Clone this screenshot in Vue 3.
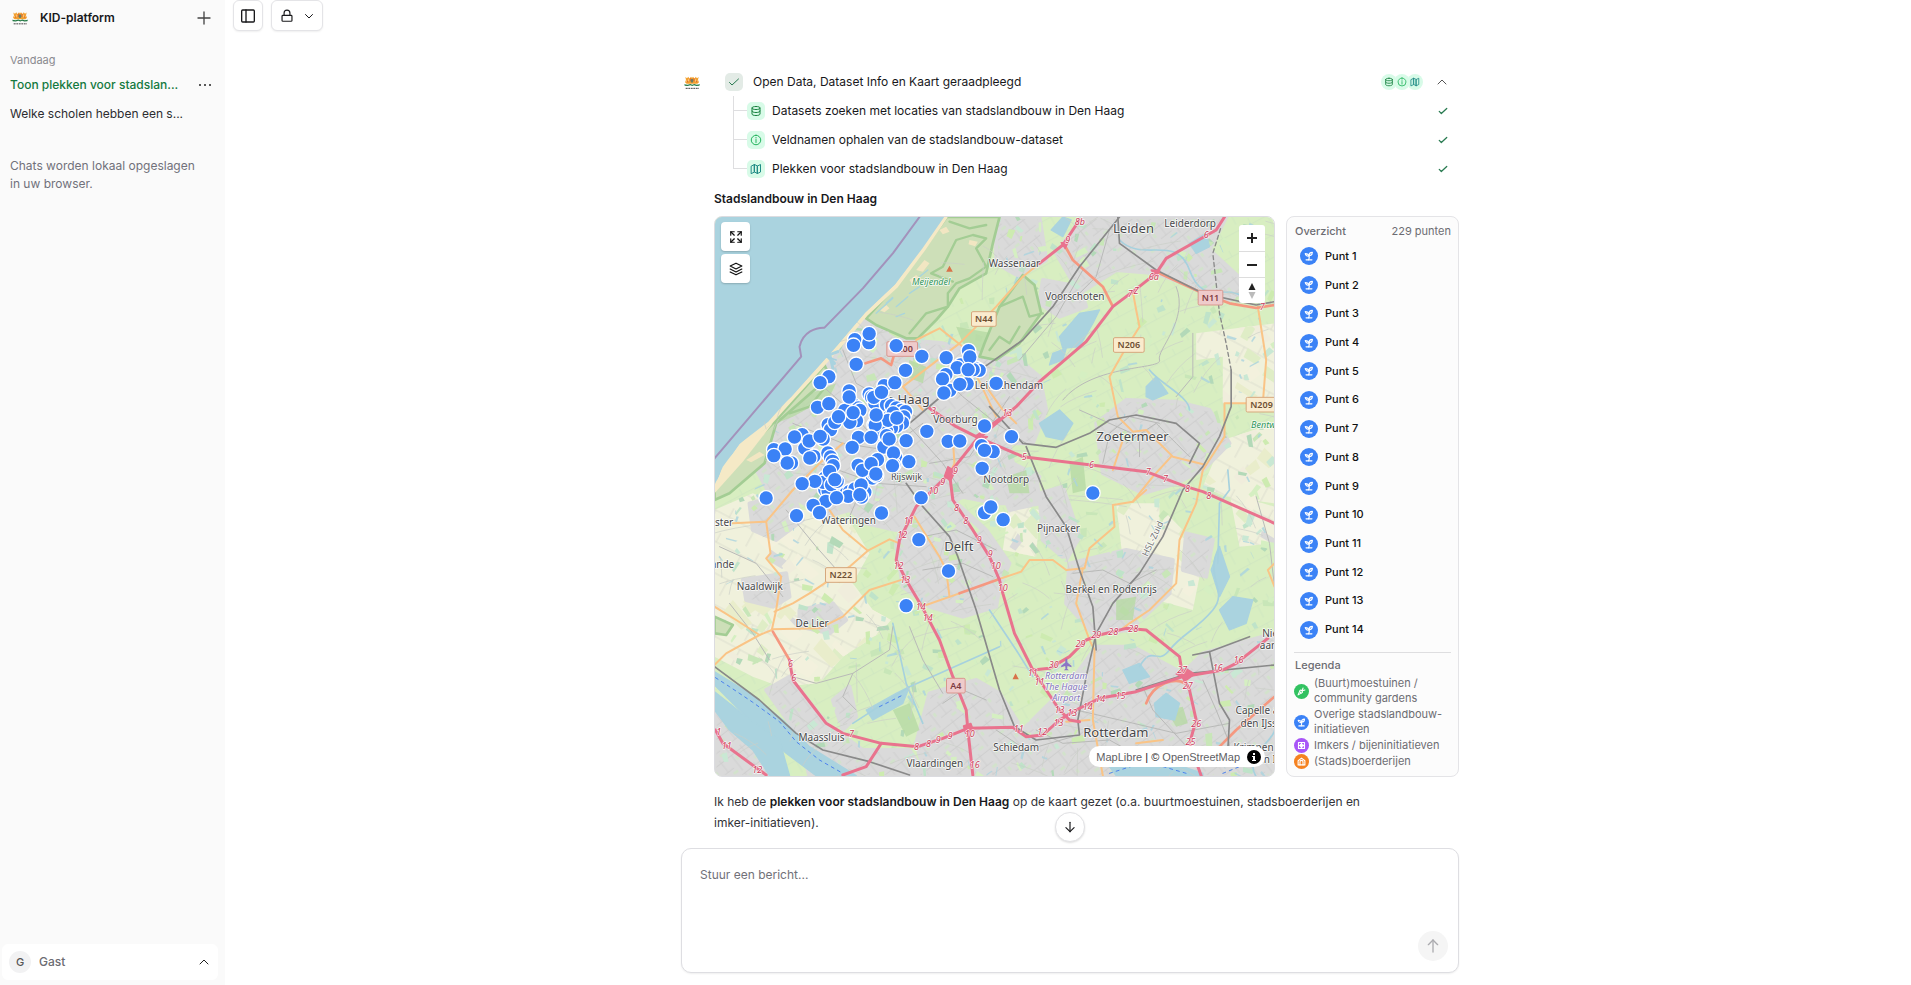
<script setup>
import { h } from 'vue'

const steps = [
  { icon: 'database', text: 'Datasets zoeken met locaties van stadslandbouw in Den Haag' },
  { icon: 'info', text: 'Veldnamen ophalen van de stadslandbouw-dataset' },
  { icon: 'map', text: 'Plekken voor stadslandbouw in Den Haag' },
]
const legend = [
  { icon: 'carrot', cls: 'green', text: '(Buurt)moestuinen / community gardens' },
  { icon: 'sprout', cls: 'blue', text: 'Overige stadslandbouw-initiatieven' },
  { icon: 'hive', cls: 'purple', text: 'Imkers / bijeninitiatieven' },
  { icon: 'barn', cls: 'orange', text: '(Stads)boerderijen' },
]

const shapes = {
  database: ['M12 3c5 0 8 1.3 8 3s-3 3-8 3-8-1.300-8-3 3-3 8-3z', 'M4 6v12c0 1.700 3 3 8 3s8-1.300 8-3V6', 'M4 12c0 1.700 3 3 8 3s8-1.300 8-3'],
  info: ['M12 2.500a9.500 9.500 0 1 0 0 19a9.500 9.500 0 1 0 0-19z', 'M12 11v6', 'M12 7v1'],
  map: ['M3 6l6-3v15l-6 3z', 'M9 3l6 3v15l-6-3z', 'M15 6l6-3v15l-6 3z'],
  check: ['M3 13l5 5L21 6'],
  up: ['M4 16l8-8 8 8'],
  down: ['M5 9l7 7 7-7'],
  plus: ['M12 3v18', 'M3 12h18'],
  panel: ['M4 3h16a1.500 1.500 0 0 1 1.500 1.500v15a1.500 1.500 0 0 1-1.500 1.500h-16a1.500 1.500 0 0 1-1.500-1.500v-15a1.500 1.500 0 0 1 1.500-1.500z', 'M9 3v18'],
  lock: ['M5 11h14a1.500 1.500 0 0 1 1.500 1.500v7a1.500 1.500 0 0 1-1.500 1.500h-14a1.500 1.500 0 0 1-1.500-1.500v-7a1.500 1.500 0 0 1 1.500-1.500z', 'M7 11V7a5 5 0 0 1 10 0v4'],
  arrowDown: ['M12 4v16', 'M5 13l7 7 7-7'],
  arrowUp: ['M12 21V3', 'M5 10l7-7 7 7'],
  expand: ['M3 9V3h6', 'M3 3l6 6', 'M21 9V3h-6', 'M21 3l-6 6', 'M3 15v6h6', 'M3 21l6-6', 'M21 15v6h-6', 'M21 21l-6-6'],
  layers: ['M12 2l10 5-10 5L2 7z', 'M2 12l10 5 10-5', 'M2 17l10 5 10-5'],
  sprout: ['M5 21h14', 'M11 21c2-3 2-6 1-10', 'M12 12C11 7 8 6 3 6c1 5 4 7 9 6z', 'M12 11c0-6 4-8 8-8 0 5-2 8-8 8z'],
  carrot: ['M3 21L8 9c3-3 8 3 6 6z', 'M14 10l2-7', 'M14 10l7-2', 'M8 13l3 3'],
  hive: ['M4 4h16v16H4z', 'M9 9h.500', 'M15 9h.500', 'M9 15h.500', 'M15 15h.500', 'M12 4v16', 'M4 12h16'],
  barn: ['M3 21V10l9-7 9 7v11z', 'M8 21v-8a4 4 0 0 1 8 0v8'],
}
const Icon = (props) =>
  h('svg', { class: 'icon', viewBox: '0 0 24 24', 'aria-hidden': 'true' }, shapes[props.name].map((d) => h('path', { d })))
Icon.props = ['name']

const CrestLogo = () =>
  h('svg', { viewBox: '0 0 48 42', 'aria-hidden': 'true' }, [
    h('path', { fill: '#f3a02e', d: 'M4 3l5 4 4-5 3 6 5-6 3 4 3-4 5 6 3-6 4 5 5-4-2 9 3 7-5 4H8l-5-4 3-7z' }),
    h('path', { fill: '#f8cf94', d: 'M13 8l4 5-5 5zM35 8l-4 5 5 5zM6 12l3 4-4 2zM42 12l-3 4 4 2z' }),
    h('path', { fill: '#e2702d', d: 'M17 7h4v9h-4zM28 7h4v9h-4zM9 15h4v4H9zM36 15h4v4h-4z' }),
    h('ellipse', { fill: '#6c7d63', cx: 24, cy: 14, rx: 4, ry: 6 }),
    h('path', { fill: '#237a45', d: 'M1 25l10 1 8-2 6 2 6-2 7 2 10-1-2 4-9 1-7-2-5 2-6-2-8 2-9-1z' }),
    h('path', { fill: 'none', stroke: '#444', 'stroke-width': 3, 'stroke-dasharray': '4 1 2 1 5 2', d: 'M5 37h40' }),
  ])

/* Map drawing: three units per screen pixel */
let seed = 11
const rnd = () => {
  seed = (seed * 16807) % 2147483647
  return seed / 2147483647
}
const patch = (x, y, w, t, angle) => {
  const c = Math.cos(angle), s = Math.sin(angle)
  return [[-w, -t], [w, -t * 0.7], [w * 0.8, t], [-w * 0.9, t]]
    .map(([a, b]) => `${Math.round(x + a * c - b * s)},${Math.round(y + a * s + b * c)}`)
    .join(' ')
}
const greens = ['#c8e6b8', '#cdebb0', '#bfe3c9', '#d5efc2', '#c9e8d4', '#b3d9b8']
const creams = ['#e9edcb', '#f3f1dd', '#dfedc6', '#f0eddc', '#d9d9d9']
const parks = Array.from({ length: 520 }, () => ({
  points: patch(15 + rnd() * 1680, 21 + rnd() * 1680, 4 + rnd() * 17, 3 + rnd() * 8, rnd() * 3),
  fill: greens[Math.floor(rnd() * greens.length)],
}))
const fields = Array.from({ length: 300 }, () => ({
  points: patch(15 + rnd() * 1680, 21 + rnd() * 1680, 12 + rnd() * 34, 8 + rnd() * 20, 0.5 + rnd() * 0.4),
  fill: creams[Math.floor(rnd() * creams.length)],
}))
const ponds = Array.from({ length: 190 }, () => ({
  points: patch(15 + rnd() * 1680, 21 + rnd() * 1680, 4 + rnd() * 14, 1 + rnd() * 3, rnd() * 3),
}))
const lanes = Array.from({ length: 210 }, () => {
  const x = Math.round(15 + rnd() * 1680), y = Math.round(21 + rnd() * 1680)
  const a = rnd() * 3, l = 30 + rnd() * 90
  return `M${x},${y}q${Math.round(Math.cos(a) * l)},${Math.round(Math.sin(a) * l * 0.4)} ${Math.round(Math.cos(a) * l * 1.6)},${Math.round(Math.sin(a) * l)}`
})

const urban = [
  'M470,328 590,390 700,400 800,425 850,440 930,450 990,500 1010,600 970,700 900,700 910,760 990,800 960,880 860,880 760,860 700,890 640,930 560,960 470,940 420,900 350,920 250,860 180,850 130,760 190,660 320,510 390,405Z',
  'M600,890 720,860 830,960 900,1060 870,1130 860,1190 760,1220 660,1190 580,1130 560,1000Z',
  'M1160,640 1250,570 1400,575 1500,600 1560,700 1480,780 1400,820 1300,850 1180,790Z',
  'M1120,21 1550,21 1500,120 1620,230 1560,270 1340,190 1220,180 1110,250 1040,130Z',
  'M1000,210 1110,230 1130,290 1050,320 990,280Z',
  'M860,21 990,21 1010,150 930,200 860,160Z',
  'M650,1700 620,1600 660,1450 800,1410 870,1450 940,1560 1080,1420 1160,1310 1270,1310 1420,1390 1480,1330 1695,1270 1695,1700Z',
  'M1080,1060 1250,1020 1390,1050 1380,1150 1260,1260 1150,1270 1070,1180Z',
  'M990,850 1060,830 1110,980 1070,1050 1000,990Z',
  'M170,1440 240,1400 350,1540 460,1620 600,1620 650,1700 300,1700 270,1580Z',
  'M100,1110 230,1090 240,1160 190,1190 110,1170Z',
  'M270,1200 370,1180 410,1230 360,1270 270,1250Z',
  'M120,880 250,850 280,930 200,990 130,960Z',
  'M15,1480 120,1570 220,1700 15,1700Z',
  'M1430,970 1510,990 1490,1100 1420,1080Z',
  'M860,800 980,790 990,880 900,900Z',
  'M370,1470 420,1430 440,1520 400,1560Z',
]
const cream = [
  'M15,900 130,850 250,900 400,900 480,1030 430,1120 490,1200 545,1230 510,1270 400,1340 330,1420 210,1430 130,1400 15,1340Z',
  'M1460,370 1695,340 1695,580 1540,580 1540,440 1460,450Z',
  'M1540,690 1695,640 1695,880 1550,860 1480,830Z',
  'M1220,880 1350,880 1350,1010 1240,1050Z',
  'M1370,910 1420,960 1470,1100 1450,1200 1340,1170 1300,1080Z',
  'M900,880 990,900 980,1040 880,1020Z',
  'M1560,850 1695,890 1695,1000 1590,1010Z',
]
const dunes = [
  'M712,21 870,21 850,100 830,190 750,235 715,290 680,330 625,385 590,385 500,345 470,325 560,225 640,120Z',
  'M870,290 940,195 975,225 995,310 930,400 860,450 810,440 825,400Z',
  'M345,465 360,500 200,640 165,760 60,850 15,870 15,835 100,730 200,630Z',
  'M15,1220 70,1245 50,1275 15,1270Z',
]
const woods = [
  'M890,800 950,780 960,850 900,850Z', 'M550,1500 600,1480 630,1560 590,1580Z', 'M1370,1500 1420,1490 1435,1540 1400,1550Z',
  'M600,450 650,470 640,520 590,500Z', 'M740,350 850,370 840,440 760,400Z', 'M380,520 360,560 250,620 200,640 280,560Z',
  'M1080,760 1120,740 1130,840 1090,850Z', 'M1220,1170 1280,1160 1270,1230 1220,1230Z',
]
const water = [
  'M15,1385 120,1450 220,1530 300,1610 440,1697 320,1697 230,1630 150,1560 15,1425Z',
  'M15,1445 110,1520 210,1590 240,1697 180,1697 130,1620 60,1560 15,1500Z',
  'M1050,380 1110,310 1170,300 1150,340 1110,410 1060,415Z',
  'M1030,430 1070,415 1060,450 1020,465Z',
  'M990,640 1050,600 1090,640 1060,690 1010,680Z',
  'M1310,530 1340,500 1375,550 1330,570 1310,560Z',
  'M1025,60 1060,21 1085,30 1060,80Z',
  'M1530,1200 1570,1160 1630,1170 1610,1240 1560,1260Z',
  'M1335,1480 1370,1450 1410,1480 1395,1530 1340,1520Z',
  'M1240,1380 1290,1360 1320,1400 1260,1420Z',
  'M1505,1080 1530,1010 1560,1100 1530,1160Z',
  'M1440,100 1490,70 1500,110 1460,130Z',
  'M470,1500 560,1450 600,1430 580,1480 490,1530Z',
  'M1200,1670 1330,1640 1480,1690 1480,1697 1220,1697Z',
]
const canals = [
  'M1230,90 C1300,160 1400,70 1440,180 S1540,220 1600,260', 'M1640,1700 C1600,1640 1695,1590 1695,1560',
  'M1320,480 C1350,520 1440,560 1440,600', 'M1555,780 1560,840 1530,880 1525,1060', 'M1530,1010 C1480,1100 1560,1140 1510,1200 S1420,1270 1380,1320 1330,1300 1290,1370',
  'M550,1240 590,1420 640,1540', 'M430,1540 600,1430 870,1310', 'M840,1200 920,1320 970,1400', 'M340,410 350,440 380,450',
]
const minor = [
  'M1120,180 1040,320 930,450', 'M1200,60 1160,200 1100,260', 'M1400,230 C1440,330 1340,420 1350,450 S1150,460 1060,570 1000,600',
  'M550,1250 540,1320 430,1390 320,1420 250,1400', 'M430,1390 400,1460 440,1500', 'M600,1250 640,1350 700,1450', 'M500,530 600,650 700,760 760,850',
  'M400,420 440,520 620,620', 'M250,640 400,700 530,720 640,640', 'M330,520 420,600 560,760', 'M300,750 500,820 650,830', 'M420,920 480,780 560,690',
  'M700,500 760,560 860,640 950,700', 'M660,760 780,740 900,560', 'M1110,600 1290,680 1290,740', 'M1250,700 1340,640 1400,700 1440,740',
  'M1180,760 1200,670 1260,620 1350,640', 'M1100,1500 1230,1530 1400,1570 1560,1540', 'M980,1560 1060,1600 1200,1590 1290,1640', 'M860,1560 950,1620 1090,1580',
  'M1300,1430 1330,1500 1450,1630', 'M1480,1410 1520,1500 1560,1600 1560,1660', 'M700,1480 760,1440 830,1470', 'M640,980 740,960 860,1020', 'M640,1080 760,1060 850,1100',
  'M1090,1090 1180,1080 1260,1120 1340,1080', 'M1450,370 1450,500 1400,560', 'M1640,860 1680,1000 1695,1130', 'M30,1010 140,1060 220,1160', 'M230,900 320,1010 400,1100', 'M60,1180 130,1270 180,1350',
]
const secondary = [
  'M940,200 860,290 750,400 580,530 640,600', 'M620,390 690,355 760,410 860,620', 'M1270,245 1280,300 1290,350 1240,430 1200,500 1225,620 1270,665 1310,660 1390,740 1490,765',
  'M1385,740 1330,800 1270,875', 'M1240,690 1210,780', 'M1645,290 1670,450 1660,580 1545,580 1545,680 1480,780 1460,880 1410,990 1400,1120 1320,1200 1260,1240 1240,1255',
  'M1310,840 1270,875 1210,885 1215,950 1140,1015 1125,1075 1070,1080 1030,1050 960,1050 935,1085 860,1110', 'M1120,1075 1100,1180 1140,1290 1155,1320 1150,1530 1180,1697',
  'M250,840 170,935 183,1030 170,1045 215,1100 200,1200 187,1260 150,1275 80,1230 15,1190', 'M70,940 170,935', 'M360,900 400,960 475,1022 540,988 570,1000', 'M475,1022 420,1070 300,1150 250,1180 195,1205',
  'M187,1258 330,1255 400,1220 480,1140 590,1105', 'M615,920 690,1040 710,1080 720,1160', 'M150,1275 50,1330 15,1365', 'M650,1185 750,1150', 'M250,840 330,760 400,700',
  'M1695,1060 1675,1080 1695,1130', 'M1070,1535 1140,1530', 'M1280,1600 1360,1590', 'M730,690 735,760 720,790', 'M830,530 880,600 920,640', 'M990,160 940,200',
]
const trunk = [
  'M1340,185 1480,250 1560,280 1640,294 1695,285', 'M1065,105 1090,150 1180,230 1210,290', 'M750,1150 870,1107', 'M468,460 515,445 545,465 555,430', 'M190,1265 240,1350',
  'M1695,1460 1580,1560 1530,1610', 'M1310,1480 C1330,1420 1400,1400 1425,1420',
]
const motorway = [
  'M1110,30 1060,105 990,160', 'M1545,21 1520,60 1370,145 1340,190 1270,245 1210,290 1130,395 990,515 920,590 800,690 720,790 620,890 570,990 560,1050 590,1110 640,1195 690,1290 730,1400 770,1500 775,1560 790,1695',
  'M660,595 740,650 800,680 940,740 1145,765 1310,785 1430,830 1480,845 1695,940', 'M720,790 730,870 790,960 840,1040 870,1110 880,1150 915,1270 970,1380 1050,1500 1080,1530 1110,1535',
  'M400,1695 470,1670 515,1600', 'M240,1350 250,1410 350,1540 400,1570 515,1600 625,1610 700,1585 775,1555 910,1552 950,1580 1000,1575 1050,1530 1100,1500 1170,1465 1280,1445 1420,1400 1540,1380 1580,1360 1675,1285',
  'M970,1380 1020,1375 1080,1340 1130,1290 1170,1275 1250,1255 1310,1260 1410,1340 1420,1400 1440,1440 1460,1530 1440,1600 1475,1697', 'M18,1560 40,1600 170,1695', 'M800,680 868,628',
]
const rails = [
  'M1230,21 1110,170 1030,290 940,390 840,460 700,555 600,640', 'M590,820 640,890 720,980 745,1040 800,1200 870,1440 915,1550 980,1590 1110,1575 1105,1530 1130,1400 1160,1270 1210,1180 1290,1090 1360,980 1420,840 1480,770 1530,680 1565,590 1565,480',
  'M840,590 940,700 1040,712 1140,670 1200,630 1280,615 1400,640 1470,700 1440,760', 'M950,710 1010,860 1070,950 1110,1080 1150,1190 1160,1320', 'M1225,21 1230,100 1340,180 1480,250 1640,285 1695,275',
  'M1280,1440 1440,1390 1695,1365', 'M15,1370 150,1470 260,1570 340,1620 480,1655 600,1695', 'M1450,1335 1500,1325 1530,1480 1560,1530 1555,1620', 'M1500,1325 1620,1280',
]

const towns = [
  [1272, 68, 'Leiden', 39], [1442, 50, 'Leiderdorp', 30], [915, 172, 'Wassenaar', 30], [1096, 271, 'Voorschoten', 30], [898, 538, 'Leidschendam', 30],
  [570, 583, 'Den Haag', 39], [738, 640, 'Voorburg', 30], [591, 809, 'Rijswijk', 27], [890, 818, 'Nootdorp', 30], [1269, 693, 'Zoetermeer', 39],
  [417, 941, 'Wateringen', 30], [748, 1022, 'Delft', 39], [151, 1140, 'Naaldwijk', 30], [308, 1251, 'De Lier', 30], [336, 1592, 'Maassluis', 30],
  [676, 1671, 'Vlaardingen', 30], [1047, 966, 'Pijnacker', 30], [1205, 1149, 'Berkel en Rodenrijs', 30], [1219, 1580, 'Rotterdam', 39], [920, 1622, 'Schiedam', 30],
  [12, 948, 'Monster', 30], [-33, 1074, '’s-Gravenzande', 30], [1660, 1513, 'Capelle aan', 30], [1660, 1552, 'den IJssel', 30], [1632, 1622, 'Krimpen', 30], [1703, 1280, 'Nieuw', 30], [1708, 1318, 'aan den', 30], [1664, 1660, 'aan den IJssel', 30],
]
const shields = [
  [823, 327, 'N44', 'n'], [578, 417, 'A200', 'a'], [1258, 405, 'N206', 'n'], [1503, 263, 'N11', 'a'], [1656, 584, 'N209', 'n'], [394, 1095, 'N222', 'n'], [739, 1427, 'A4', 'a'],
]
const exits = [
  [1111, 46, '8b'], [1075, 100, '9'], [1490, 84, '6'], [1333, 209, '6a'], [1262, 262, '7'], [1280, 252, 'Z'], [1658, 300, '7'], [893, 618, '13'], [672, 611, '3'],
  [738, 792, '9'], [700, 825, '9'], [671, 852, '10'], [944, 749, '5'], [1146, 774, '6'], [1316, 795, '7'], [1368, 815, '7'], [1434, 846, '8'], [1498, 868, '8'],
  [598, 942, '11'], [578, 985, '12'], [567, 1076, '12'], [587, 1118, '13'], [634, 1200, '14'], [655, 1234, '14'], [741, 903, '8'], [769, 941, '8'], [809, 998, '9'],
  [842, 1040, '9'], [859, 1076, '10'], [880, 1144, '10'], [243, 1370, '6'], [253, 1414, '6'], [426, 1580, '7'], [621, 1620, '8'], [657, 1611, '8'], [686, 1600, '9'],
  [722, 1586, '9'], [781, 1580, '10'], [796, 1674, '16'], [143, 1690, '12'], [52, 1617, '11'], [28, 1575, '1'], [970, 1398, '11'], [990, 1425, '11'], [1033, 1374, '30'],
  [1113, 1311, '29'], [1160, 1285, '29'], [1211, 1274, '28'], [1271, 1266, '28'], [1418, 1389, '27'], [1435, 1436, '27'], [1525, 1384, '16'], [1587, 1359, '16'],
  [1233, 1467, '15'], [1172, 1477, '14'], [1135, 1500, '14'], [1088, 1517, '13'], [1050, 1510, '13'], [1047, 1548, '13'], [998, 1575, '12'], [928, 1566, '11'], [1460, 1550, '26'], [1443, 1604, '25'],
]
const markers = [
  [435, 390], [477, 399], [357, 501], [418, 544], [523, 528], [478, 553], [485, 562], [510, 572], [420, 598], [435, 588], [445, 595], [450, 602], [405, 602], [355, 645], [362, 660], [375, 638],
  [440, 633], [420, 638], [495, 580], [530, 585], [545, 588], [560, 595], [575, 602], [587, 606], [582, 622], [578, 640], [560, 650], [545, 655], [530, 665], [518, 670], [540, 620], [550, 610], [535, 632],
  [493, 645], [496, 646], [522, 712], [530, 678], [555, 738], [558, 745], [552, 765], [277, 675], [285, 716], [340, 688], [192, 720], [245, 760], [312, 740], [354, 730], [362, 742], [368, 755], [370, 768],
  [345, 805], [350, 830], [345, 840], [355, 845], [340, 818], [365, 825], [382, 815], [395, 858], [408, 852], [420, 845], [435, 838], [415, 860], [445, 767], [503, 750], [488, 805], [500, 798], [492, 792], [465, 848], [455, 862],
  [776, 423], [752, 466], [742, 474], [798, 476], [808, 482], [790, 480], [708, 495], [772, 522], [720, 542], [815, 708], [850, 726],
  [478, 372], [431, 407], [559, 408], [636, 440], [439, 464], [587, 482], [555, 519], [331, 519], [418, 562], [492, 563], [515, 548],
  [323, 593], [357, 582], [430, 609], [386, 621], [499, 616], [561, 625], [651, 665], [538, 688], [589, 693], [551, 730], [597, 756], [548, 768],
  [254, 682], [298, 694], [331, 680], [226, 718], [192, 738], [232, 760], [300, 745], [446, 683], [484, 683], [427, 713], [458, 782], [484, 762], [498, 793],
  [359, 785], [375, 810], [315, 815], [277, 822], [454, 826], [450, 855], [348, 875], [310, 887], [329, 909], [260, 918], [169, 865], [380, 864], [515, 910], [634, 864],
  [709, 444], [780, 442], [775, 480], [698, 508], [750, 524], [702, 550], [859, 521], [824, 649], [715, 695], [750, 694], [824, 722], [817, 776], [905, 681], [1149, 850],
  [627, 990], [716, 1084], [589, 1188], [824, 909], [843, 892], [880, 930],
]
</script>

<template>
  <div class="app">
    <aside class="sidebar">
      <header class="brand">
        <CrestLogo class="brand-logo" />
        <strong>KID-platform</strong>
        <button class="plain" aria-label="Nieuwe chat"><Icon name="plus" class="s16" /></button>
      </header>
      <nav class="history">
        <h2>Vandaag</h2>
        <div class="chat active">
          <a href="#">Toon plekken voor stadslan...</a>
          <button class="plain dots" aria-label="Meer"><i></i><i></i><i></i></button>
        </div>
        <div class="chat"><a href="#">Welke scholen hebben een s...</a></div>
        <p>Chats worden lokaal opgeslagen in uw browser.</p>
      </nav>
      <button class="account">
        <span class="initial">G</span>
        <span class="name">Gast</span>
        <Icon name="up" class="s12" />
      </button>
    </aside>

    <main>
      <header class="toolbar">
        <button aria-label="Zijbalk"><Icon name="panel" class="s16" /></button>
        <button class="wide" aria-label="Zichtbaarheid"><Icon name="lock" class="s14" /><Icon name="down" class="s12" /></button>
      </header>

      <section class="conversation">
        <CrestLogo class="avatar" />
        <div class="message">
          <div class="tools">
            <div class="summary">
              <span class="tile grey"><Icon name="check" class="s12" /></span>
              <span class="label">Open Data, Dataset Info en Kaart geraadpleegd</span>
              <span class="badges">
                <span v-for="s in steps" :key="s.icon" :class="['badge', s.icon]"><Icon :name="s.icon" class="s10" /></span>
              </span>
              <button class="plain" aria-label="Inklappen"><Icon name="up" class="s12" /></button>
            </div>
            <ul class="steps">
              <li v-for="s in steps" :key="s.text">
                <span :class="['tile', s.icon]"><Icon :name="s.icon" class="s12" /></span>
                <span class="label">{{ s.text }}</span>
                <Icon name="check" class="s10 done" />
              </li>
            </ul>
          </div>

          <h1>Stadslandbouw in Den Haag</h1>

          <div class="result">
            <div class="map">
              <svg class="canvas" viewBox="15 21 1680 1677" preserveAspectRatio="xMidYMid slice" role="img" aria-label="Kaart">
                <defs>
                  <pattern id="streets" width="78" height="66" patternUnits="userSpaceOnUse" patternTransform="rotate(-38)">
                    <rect width="78" height="66" fill="#dadada" />
                    <path d="M0,10H78M0,44H40M20,0V44M58,10V66" stroke="#cbcbcb" stroke-width="2" fill="none" />
                    <path d="M30,54h16v8h-16zM64,20h8v12h-8z" fill="#d2e3cb" />
                  </pattern>
                  <pattern id="meadow" width="96" height="60" patternUnits="userSpaceOnUse" patternTransform="rotate(-28)">
                    <rect width="96" height="60" fill="#d8eec1" />
                    <path d="M0,20H96M30,20V60M70,0V20" stroke="#cbe4c0" stroke-width="2" />
                  </pattern>
                  <pattern id="farm" width="130" height="84" patternUnits="userSpaceOnUse" patternTransform="rotate(28)">
                    <rect width="130" height="84" fill="#f0f1dc" />
                    <path d="M0,30H130M50,30V84M95,0V30" stroke="#d3d5c8" stroke-width="2" />
                  </pattern>
                  <clipPath id="farmland"><path v-for="d in cream" :key="d" :d="d" /></clipPath>
                </defs>
                <rect x="15" y="21" width="1680" height="1677" fill="url(#meadow)" />
                <path v-for="d in cream" :key="d" :d="d" fill="url(#farm)" />
                <g clip-path="url(#farmland)"><polygon v-for="(f, i) in fields" :key="i" :points="f.points" :fill="f.fill" /></g>
                <path v-for="d in urban" :key="d" :d="d" fill="url(#streets)" stroke="#dadada" stroke-width="12" stroke-linejoin="round" />
                <polygon v-for="(p, i) in parks" :key="i" :points="p.points" :fill="p.fill" />
                <path v-for="d in woods" :key="d" :d="d" fill="#b6d9a4" opacity="0.8" />
                <polygon v-for="(p, i) in ponds" :key="i" :points="p.points" fill="#aad3df" opacity="0.8" />
                <path v-for="d in dunes" :key="d" :d="d" fill="#cddfb8" stroke="#a3cd94" stroke-width="8" stroke-linejoin="round" />
                <path class="reserve" d="M720,35 780,55 830,45M665,190 700,170 740,90 790,75 830,85 800,115 830,170 780,205 740,220 715,250 715,290 650,310 600,370M665,190 690,200 730,215M870,290 940,260 960,320 1000,310M840,420 870,380 900,400 930,350M340,540 300,590 240,610" />
                <path class="sand" d="M620,180l25,-30 15,10 -20,25zM600,210l20,-15 15,15 -25,15zM510,300l20,-15 10,10 -15,12zM780,90l25,5 -8,14 -20,-6zM690,60l20,-10 10,15 -20,8zM110,750l40,-25 15,10 -40,22z" />
                <path class="rill" d="M500,310l50,-45M560,290l35,-30M600,250l30,-20M560,320l25,-10M630,200l25,-20M530,280l20,-18" />
                <path d="M15,21H708L640,120 560,228 470,312 390,408 330,475 250,562 180,640 95,705 50,770 15,838Z" fill="#aad3df" stroke="#f5e9c6" stroke-width="12" />
                <path d="M15,850 40,760 100,705 190,640 100,755Z" fill="#f5e9c6" />
                <path class="harbour" d="M330,415l45,45M345,440l40,-15M360,430l10,45" />
                <path v-for="d in water" :key="d" :d="d" fill="#aad3df" stroke="#aad3df" stroke-width="4" stroke-linejoin="round" />
                <path v-for="d in canals" :key="d" :d="d" class="canal" />
                <path v-for="(d, i) in lanes" :key="i" :d="d" class="lane" />
                <path d="M15,21H704L638,116 557,223 467,308 386,402 246,560 90,702 40,770 15,825Z" fill="#aad3df" />
                <path class="ferry" d="M18,1403 60,1430 130,1477 210,1535 260,1595 330,1650 400,1690M510,1490 580,1455M1200,1690 1310,1655 1430,1690M1540,1690 1590,1670" />
                <path v-for="d in minor" :key="d" :d="d" class="minor" />
                <path v-for="d in secondary" :key="d" :d="d" class="secondary" />
                <path v-for="d in trunk" :key="d" :d="d" class="trunk" />
                <path v-for="d in rails" :key="d" :d="d" class="rail" />
                <path class="rail tunnel" d="M1565,480 1550,400 1530,310 1510,130 1535,50" />
                <path v-for="d in motorway" :key="d" :d="d" class="motorway" />
                <path class="junction" d="M715,770l22,14 -14,30 -18,-16zM1400,1392l30,-16 26,16 -24,18zM762,1548l22,-8 8,22 -24,8zM800,676l34,4 -16,14zM1325,180l26,2 -12,18zM1055,98l20,0 -8,18z" />
                <path class="frontier" d="M15,745 275,440 270,410 C280,365 320,352 345,353 L460,235 550,130 630,21" />
                <path class="peak" d="M710,185l10,-18 10,18zM909,1408l9,-18 10,18z" />
                <path class="plane" d="M1068,1346l5,0 1,12 12,9 0,5 -12,-4 -1,8 5,5 -15,0 5,-5 -1,-8 -12,4 0,-5 12,-9z" />
                <g class="exits"><text v-for="(e, i) in exits" :key="i" :x="e[0]" :y="e[1]">{{ e[2] }}</text></g>
                <g class="towns"><text v-for="t in towns" :key="t[2] + t[0]" :x="t[0]" :y="t[1]" :font-size="t[3]">{{ t[2] }}</text></g>
                <g v-for="s in shields" :key="s[2]" :class="['shield', s[3]]">
                  <rect :x="s[0] - s[2].length * 9 - 10" :y="s[1] - 22" :width="s[2].length * 18 + 20" height="44" rx="4" />
                  <text :x="s[0]" :y="s[1] + 10">{{ s[2] }}</text>
                </g>
                <text class="nature" x="665" y="224">Meijendel</text>
                <text class="nature" x="1685" y="654">Bentwoud</text>
                <g class="airport"><text x="1070" y="1408">Rotterdam</text><text x="1070" y="1441">The Hague</text><text x="1070" y="1474">Airport</text></g>
                <text class="line-name" transform="translate(1338 990) rotate(-65)">HSL-Zuid</text>
                <g class="markers"><circle v-for="(m, i) in markers" :key="i" :cx="m[0] + 1" :cy="m[1] - 1" r="22" /></g>
              </svg>
              <div class="map-left">
                <button aria-label="Volledig scherm"><Icon name="expand" class="s14" /></button>
                <button aria-label="Lagen"><Icon name="layers" class="s14" /></button>
              </div>
              <div class="map-right">
                <button aria-label="Inzoomen"><svg viewBox="0 0 26 26"><path d="M13 8v10M8 13h10" /></svg></button>
                <button aria-label="Uitzoomen"><svg viewBox="0 0 26 26"><path d="M8 13h10" /></svg></button>
                <button aria-label="Noorden boven"><svg viewBox="0 0 26 26"><path class="north" d="M9.500 12L13 5l3.500 7z" /><path class="south" d="M9.500 14l3.500 7 3.500-7z" /></svg></button>
              </div>
              <div class="attribution">
                <span><a href="#">MapLibre</a> | © <a href="#">OpenStreetMap</a></span>
                <button aria-label="Bronvermelding"><svg viewBox="0 0 14 14"><circle cx="7" cy="7" r="7" /><path d="M6 3h2v2H6zM5 6h3v4h1v1H5v-1h1V7H5z" /></svg></button>
              </div>
            </div>

            <aside class="overview">
              <header><span>Overzicht</span><span>229 punten</span></header>
              <ol>
                <li v-for="n in 14" :key="n"><span class="pin blue"><Icon name="sprout" class="s10" /></span>Punt {{ n }}</li>
              </ol>
              <section class="legend">
                <h2>Legenda</h2>
                <div v-for="l in legend" :key="l.text">
                  <span :class="['pin', l.cls]"><Icon :name="l.icon" class="s9" /></span><span>{{ l.text }}</span>
                </div>
              </section>
            </aside>
          </div>

          <p class="answer">
            Ik heb de <strong>plekken voor stadslandbouw in Den Haag</strong> op de kaart gezet (o.a. buurtmoestuinen, stadsboerderijen en <span class="whole">imker-initiatieven).</span>
          </p>
        </div>
      </section>

      <form class="composer" @submit.prevent>
        <button type="button" class="scroll" aria-label="Naar beneden"><Icon name="arrowDown" class="s14" /></button>
        <textarea aria-label="Bericht" placeholder="Stuur een bericht..."></textarea>
        <button class="send" aria-label="Verstuur" disabled><Icon name="arrowUp" class="s16" /></button>
      </form>
    </main>
  </div>
</template>

<style>
body { background: #fff; overflow: hidden; }
</style>

<style scoped>
.app { display: flex; height: 100vh; font-family: Inter, "Liberation Sans", sans-serif; font-size: 12px; line-height: 18px; color: #18181b; }
* { box-sizing: border-box; }
button { font: inherit; color: inherit; padding: 0; border: 0; background: none; display: flex; align-items: center; justify-content: center; }
h1, h2, p, ul, ol { margin: 0; padding: 0; list-style: none; font: inherit; }
a { color: inherit; text-decoration: none; }
.icon { fill: none; stroke: currentColor; stroke-width: 2; stroke-linecap: round; stroke-linejoin: round; flex: none; }
.s9 { width: 9px; height: 9px; }
.s10 { width: 10px; height: 10px; }
.s12 { width: 12px; height: 12px; }
.s14 { width: 14px; height: 14px; }
.s16 { width: 16px; height: 16px; }

.sidebar { flex: 0 0 225px; display: flex; flex-direction: column; background: #fafafa; padding: 0 7px 5px 2px; }
.brand { display: flex; align-items: center; height: 36px; padding: 0 6px 0 10px; }
.brand-logo { width: 16px; height: 15px; margin-right: 12px; }
.brand strong { flex: 1; font-weight: 600; }
.brand .icon { color: #444; }
.history { flex: 1; padding: 15px 7px 0 8px; }
.history h2 { font-size: 11px; color: #8a8a90; }
.chat { display: flex; align-items: center; justify-content: space-between; height: 29px; color: #2c2c30; }
.history h2 + .chat { margin-top: 1px; }
.chat.active a { color: #14793f; font-weight: 500; }
.dots { gap: 3px; }
.dots i { width: 2px; height: 2px; border-radius: 1px; background: #222; }
.history p { margin-top: 29px; padding-right: 12px; color: #71717a; }
.account { height: 36px; padding: 0 8px 0 7px; border-radius: 6px; background: #fff; color: #6c6c72; }
.initial { width: 22px; height: 22px; line-height: 22px; border-radius: 11px; background: #f2f2f3; font-size: 11px; font-weight: 500; color: #555; }
.name { flex: 1; margin-left: 8px; text-align: left; font-weight: 500; }
.account .icon { color: #222; }

main { flex: 1; min-width: 0; display: flex; flex-direction: column; padding-bottom: 12px; }
.toolbar { display: flex; gap: 8px; height: 31px; padding-left: 8px; flex: none; }
.toolbar button { width: 30px; height: 31px; border: 1px solid #e4e4e7; border-radius: 6px; background: #fff; box-shadow: 0 1px 2px #0001; }
.toolbar .wide { width: 52px; gap: 9px; }
.conversation { flex: 1; min-height: 0; width: 778px; max-width: 100%; margin: 0 auto; display: flex; padding-top: 41px; position: relative; left: 2px; }
.avatar { width: 16px; height: 14px; margin: 4px 14px 0 3px; flex: none; }
.message { flex: 1; min-width: 0; }
.tools { padding: 0 11px; }
.summary { display: flex; align-items: center; height: 20px; }
.tile { width: 18px; height: 18px; border-radius: 5px; display: flex; align-items: center; justify-content: center; background: #d8fbe8; flex: none; }
.tile.grey { background: #e3ebe6; color: #287a50; }
.label { flex: 1; margin-left: 10px; }
.badges { display: flex; margin-right: 16px; }
.badge { width: 16px; height: 16px; border-radius: 8px; margin-right: -3px; background: #d8fbe8; display: flex; align-items: center; justify-content: center; }
.database { color: #15803d; }
.info { color: #22b35c; }
.map.tile, .map.badge { color: #218c86; }
.summary .plain { color: #555; }
.steps { margin-left: 8px; padding-left: 14px; margin-top: 4px; position: relative; }
.steps::before { content: ""; position: absolute; left: 0; top: 0; bottom: 14px; width: 1px; background: #dedee0; }
.steps li { display: flex; align-items: center; height: 29px; }
.steps li::before { content: ""; width: 14px; height: 1px; margin-left: -14px; background: #dedee0; }
.steps .label { margin-left: 7px; }
.done { color: #287a50; stroke-width: 3; }
h1 { margin-top: 7px; height: 26px; font-weight: 600; line-height: 18px; }
.result { display: grid; grid-template-columns: minmax(0, 561fr) minmax(0, 173fr); gap: 11px; }
.result .map { position: relative; aspect-ratio: 1; border: 1px solid #dcdce0; border-radius: 8px; overflow: hidden; }
.canvas { display: block; width: 100%; height: 100%; }
.canvas path { stroke-linecap: round; stroke-linejoin: round; }
.reserve { fill: none; stroke: #a3cd94; stroke-width: 7; }
.sand { fill: #f2e6c2; }
.rill { fill: none; stroke: #a9d5dc; stroke-width: 4; }
.harbour { fill: none; stroke: #aad3df; stroke-width: 9; }
.canal { fill: none; stroke: #a6d1de; stroke-width: 5; }
.lane { fill: none; stroke: #cacfc7; stroke-width: 2; }
.minor { fill: none; stroke: #b9bab8; stroke-width: 3; }
.secondary { fill: none; stroke: #fac486; stroke-width: 6; }
.trunk { fill: none; stroke: #f59880; stroke-width: 8; }
.rail { fill: none; stroke: #898989; stroke-width: 5; }
.tunnel { stroke-dasharray: 12 9; stroke-width: 4; }
.motorway { fill: none; stroke: #e9738e; stroke-width: 9; }
.junction { fill: #e9738e; stroke: #e9738e; stroke-width: 4; }
.frontier { fill: none; stroke: #a392bb; stroke-width: 6; }
.ferry { fill: none; stroke: #4d82ee; stroke-width: 3; stroke-dasharray: 9 12; }
.peak { fill: #d8734a; }
.plane { fill: #8b76c5; }
.canvas text { font-family: "Noto Sans", sans-serif; text-anchor: middle; paint-order: stroke; stroke: #fffc; stroke-width: 5; stroke-linejoin: round; }
.towns text { fill: #48484a; }
.exits text { fill: #cb3d5a; font-size: 27px; font-style: italic; stroke-width: 4; }
.shield text { font-size: 27px; font-weight: 600; stroke: none; fill: #6e4f32; }
.shield rect { fill: #faebcd; stroke: #d6a87d; stroke-width: 3; }
.shield.a rect { fill: #efcbcb; stroke: #d9978e; }
.shield.a text { fill: #7e3c42; }
.canvas .nature { fill: #31965a; font-style: italic; font-size: 27px; }
.airport text { fill: #8475bd; font-style: italic; font-size: 27px; }
.canvas .line-name { fill: #777; font-size: 27px; }
.markers circle { fill: #3b82f6; stroke: #fff; stroke-width: 4; }
.map-left { position: absolute; left: 6px; top: 5px; display: grid; gap: 3px; }
.map-left button { width: 29px; height: 29px; background: #fff; border-radius: 4px; box-shadow: 0 1px 2px #0003; color: #111; }
.map-right { position: absolute; right: 9px; top: 8px; background: #fff; border-radius: 3px; overflow: hidden; }
.map-right button { width: 26px; height: 26px; }
.map-right button + button { border-top: 1px solid #ddd; }
.map-right svg { width: 26px; height: 26px; fill: none; stroke: #222; stroke-width: 2; }
.map-right .north { fill: #222; stroke: none; }
.map-right .south { fill: #bbb; stroke: none; }
.attribution { position: absolute; right: 9px; bottom: 9px; height: 21px; padding: 0 4px 0 7px; display: flex; align-items: center; gap: 7px; border-radius: 11px; background: #fff; font: 11px "Liberation Sans", sans-serif; color: #222; }
.attribution a { color: #606064; }
.attribution svg { width: 14px; height: 14px; }
.attribution svg path { fill: #fff; }

.overview { display: flex; flex-direction: column; border: 1px solid #e4e4e7; border-radius: 8px; background: #fcfcfc; padding: 7px 7px 6px; font-size: 11px; line-height: 15px; color: #6c6c72; }
.overview header { display: flex; justify-content: space-between; padding: 0 0 0 1px; }
.overview header span:first-child { font-weight: 500; }
.overview ol { flex: 1; display: flex; flex-direction: column; margin: 3px 0 8px; }
.overview li { flex: 1; display: flex; align-items: center; padding-left: 6px; color: #111; font-weight: 500; }
.pin { flex: none; display: flex; align-items: center; justify-content: center; color: #fff; border-radius: 50%; width: 15px; height: 15px; }
.pin .icon { stroke-width: 3; }
.overview li .pin { width: 18px; height: 18px; margin-right: 7px; }
.blue { background: #3b82f6; }
.green { background: #32c261; }
.purple { background: #a855f7; }
.orange { background: #f58220; }
.legend { border-top: 1px solid #dedee0; padding-top: 5px; }
.legend h2 { font-weight: 500; padding-left: 1px; margin-bottom: 3px; }
.legend div { display: flex; align-items: center; gap: 5px; margin-bottom: 1px; }
.answer { margin-top: 14px; line-height: 21px; color: #333338; }
.answer strong { font-weight: 600; color: #18181b; }
.whole { white-space: nowrap; }

.composer { position: relative; left: 2px; flex: none; display: flex; width: 778px; max-width: 100%; height: 125px; margin: 0 auto; border: 1px solid #dedee2; border-radius: 10px; background: #fff; box-shadow: 0 1px 2px #0001; }
.composer textarea { flex: 1; resize: none; border: 0; outline: 0; background: none; padding: 17px 18px; font: inherit; color: inherit; }
.composer textarea::placeholder { color: #717178; opacity: 1; }
.send { position: absolute; right: 10px; bottom: 11px; width: 30px; height: 30px; border-radius: 15px; background: #f5f5f5; color: #ababaf; }
.scroll { position: absolute; left: 50%; top: -37px; width: 30px; height: 30px; margin-left: -15px; border: 1px solid #e2e2e5; border-radius: 15px; background: #fff; box-shadow: 0 1px 2px #0002; }
</style>
